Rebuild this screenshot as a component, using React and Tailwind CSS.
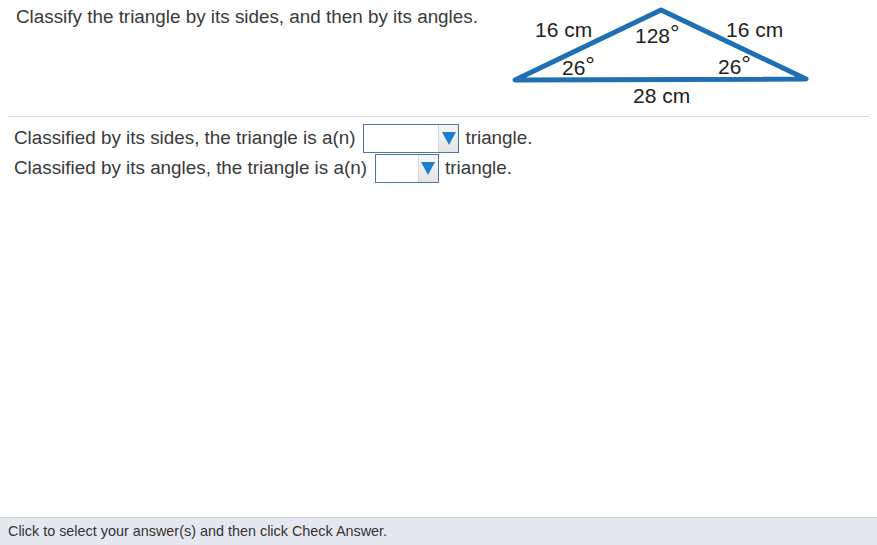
import React from 'react'

function Dropdown({ width }) {
  return (
    <span
      className={`inline-flex h-[29px] ${width} items-stretch justify-end border border-[#4a76a8] bg-white align-middle`}
    >
      <span className="flex w-[20px] items-center justify-center border-l border-[#d6d6d6] bg-gradient-to-b from-[#f7f7f7] to-[#e4e4e4]">
        <svg width="14" height="14" viewBox="0 0 14 14">
          <polygon points="0,1 14,1 7,14" fill="#1a7fd0" />
        </svg>
      </span>
    </span>
  )
}

function Deg() {
  return (
    <tspan fontSize="24" dy="-2">°</tspan>
  )
}

function Triangle() {
  return (
    <svg width="310" height="110" viewBox="0 0 310 110" className="block">
      <polygon
        points="5,80 151,10 296,79"
        fill="none"
        stroke="#1f6fb5"
        strokeWidth="5"
        strokeLinejoin="round"
      />
      <g fill="#222" fontSize="21" fontFamily="'Liberation Sans', Arial, sans-serif">
        <text x="25" y="37">16 cm</text>
        <text x="125" y="43">128<Deg /></text>
        <text x="216" y="37">16 cm</text>
        <text x="52" y="75">26<Deg /></text>
        <text x="208" y="74">26<Deg /></text>
        <text x="123" y="103">28 cm</text>
      </g>
    </svg>
  )
}

export default function App() {
  return (
    <div className="flex h-[545px] w-[877px] flex-col bg-white font-['Liberation_Sans',Arial,sans-serif] text-[#3a3a3a]">
      {/* Question header */}
      <div className="flex px-2">
        <p className="w-[502px] pl-2 pt-[6px] text-[18.85px] leading-[22px]">
          Classify the triangle by its sides, and then by its angles.
        </p>
        <Triangle />
      </div>

      <div className="mx-2 mt-[6px] border-t border-[#d8d8d8]" />

      {/* Answers */}
      <div className="px-[14px] pt-[6px] text-[18.85px]">
        <div className="flex h-[30px] items-center">
          <span>Classified by its sides, the triangle is a(n)</span>
          <span className="ml-[8px] mr-[6px] flex">
            <Dropdown width="w-[96px]" />
          </span>
          <span>triangle.</span>
        </div>
        <div className="flex h-[30px] items-center">
          <span>Classified by its angles, the triangle is a(n)</span>
          <span className="ml-[8px] mr-[6px] flex">
            <Dropdown width="w-[64px]" />
          </span>
          <span>triangle.</span>
        </div>
      </div>

      <div className="flex-1" />

      {/* Footer */}
      <div className="flex h-[28px] items-center border-t border-[#d0d3dc] bg-[#e6e8ef] px-2 text-[14.4px] text-[#333]">
        Click to select your answer(s) and then click Check Answer.
      </div>
    </div>
  )
}
